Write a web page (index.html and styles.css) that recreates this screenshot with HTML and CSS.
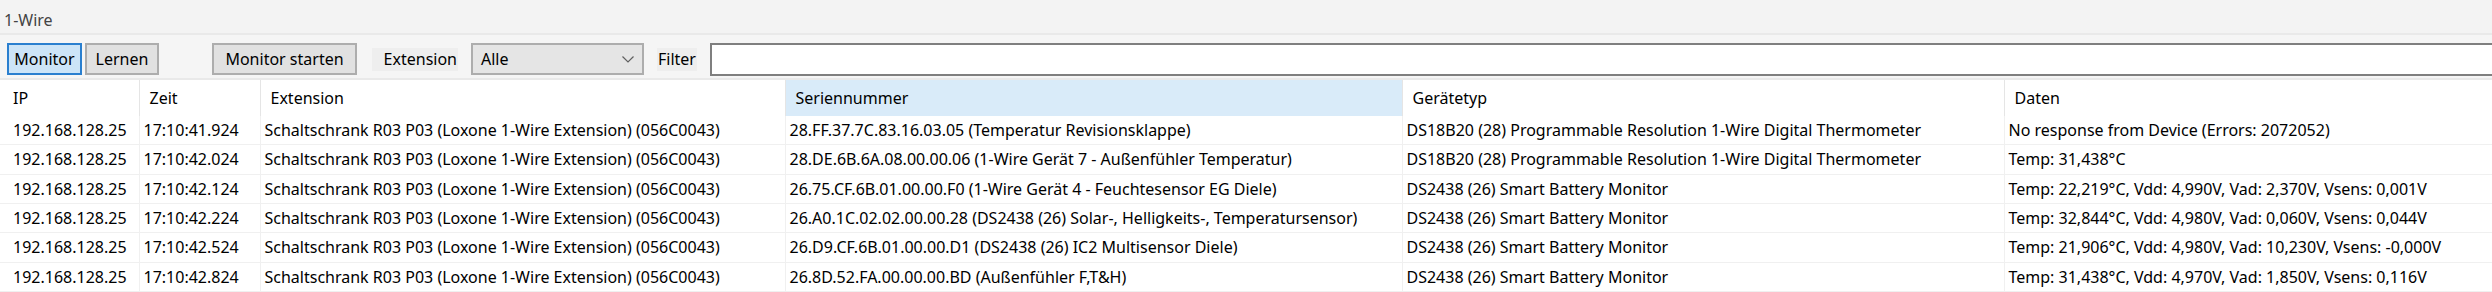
FILE: index.html
```html
<!DOCTYPE html>
<html>

<head>
    <title>1-Wire</title>
    <link rel="stylesheet" href="styles.css">
</head>

<body>
    <div class="title">1-Wire</div>
    <div class="toolbar">
        <button class="btn btn-active btn-monitor">Monitor</button>
        <button class="btn btn-learn">Lernen</button>
        <button class="btn btn-start">Monitor starten</button>
        <span class="label label-ext">Extension</span>
        <div class="combo">
            <span>Alle</span>
            <svg width="12" height="7" viewBox="0 0 12 7">
                <polyline points="0.5,0.5 6,6 11.5,0.5" fill="none" stroke="#606060" stroke-width="1.2" />
            </svg>
        </div>
        <span class="label">Filter</span>
        <input type="text" class="filter">
    </div>
    <table class="grid">
        <colgroup>
            <col class="col-ip">
            <col class="col-time">
            <col class="col-ext">
            <col class="col-serial">
            <col class="col-type">
            <col class="col-data">
        </colgroup>
        <thead>
            <tr>
                <th>IP</th>
                <th>Zeit</th>
                <th>Extension</th>
                <th class="sorted">Seriennummer</th>
                <th>Gerätetyp</th>
                <th>Daten</th>
            </tr>
        </thead>
        <tbody>
            <tr>
                <td>192.168.128.25</td>
                <td>17:10:41.924</td>
                <td>Schaltschrank R03 P03 (Loxone 1-Wire Extension) (056C0043)</td>
                <td>28.FF.37.7C.83.16.03.05 (Temperatur Revisionsklappe)</td>
                <td>DS18B20 (28) Programmable Resolution 1-Wire Digital Thermometer</td>
                <td>No response from Device (Errors: 2072052)</td>
            </tr>
            <tr>
                <td>192.168.128.25</td>
                <td>17:10:42.024</td>
                <td>Schaltschrank R03 P03 (Loxone 1-Wire Extension) (056C0043)</td>
                <td>28.DE.6B.6A.08.00.00.06 (1-Wire Gerät 7 - Außenfühler Temperatur)</td>
                <td>DS18B20 (28) Programmable Resolution 1-Wire Digital Thermometer</td>
                <td>Temp: 31,438°C</td>
            </tr>
            <tr>
                <td>192.168.128.25</td>
                <td>17:10:42.124</td>
                <td>Schaltschrank R03 P03 (Loxone 1-Wire Extension) (056C0043)</td>
                <td>26.75.CF.6B.01.00.00.F0 (1-Wire Gerät 4 - Feuchtesensor EG Diele)</td>
                <td>DS2438 (26) Smart Battery Monitor</td>
                <td>Temp: 22,219°C, Vdd: 4,990V, Vad: 2,370V, Vsens: 0,001V</td>
            </tr>
            <tr>
                <td>192.168.128.25</td>
                <td>17:10:42.224</td>
                <td>Schaltschrank R03 P03 (Loxone 1-Wire Extension) (056C0043)</td>
                <td>26.A0.1C.02.02.00.00.28 (DS2438 (26) Solar-, Helligkeits-, Temperatursensor)</td>
                <td>DS2438 (26) Smart Battery Monitor</td>
                <td>Temp: 32,844°C, Vdd: 4,980V, Vad: 0,060V, Vsens: 0,044V</td>
            </tr>
            <tr>
                <td>192.168.128.25</td>
                <td>17:10:42.524</td>
                <td>Schaltschrank R03 P03 (Loxone 1-Wire Extension) (056C0043)</td>
                <td>26.D9.CF.6B.01.00.00.D1 (DS2438 (26) IC2 Multisensor Diele)</td>
                <td>DS2438 (26) Smart Battery Monitor</td>
                <td>Temp: 21,906°C, Vdd: 4,980V, Vad: 10,230V, Vsens: -0,000V</td>
            </tr>
            <tr>
                <td>192.168.128.25</td>
                <td>17:10:42.824</td>
                <td>Schaltschrank R03 P03 (Loxone 1-Wire Extension) (056C0043)</td>
                <td>26.8D.52.FA.00.00.00.BD (Außenfühler F,T&amp;H)</td>
                <td>DS2438 (26) Smart Battery Monitor</td>
                <td>Temp: 31,438°C, Vdd: 4,970V, Vad: 1,850V, Vsens: 0,116V</td>
            </tr>
            <tr>
                <td></td>
                <td></td>
                <td></td>
                <td></td>
                <td></td>
                <td></td>
            </tr>
        </tbody>
    </table>
</body>

</html>
```

FILE: styles.css
```css
body {
    margin: 0;
    background-color: #f3f3f3;
    font-family: "Noto Sans", "Liberation Sans", Arial, sans-serif;
    font-size: 16px;
    color: #000;
    overflow: hidden;
}

.title {
    height: 21px;
    padding: 12px 0 0 4px;
    line-height: 16px;
    color: #444;
    border-bottom: 2px solid #e9e9e9;
}

.toolbar {
    display: flex;
    align-items: center;
    height: 43px;
    padding-left: 7px;
    border-bottom: 2px solid #e9e9e9;
    background-color: #f5f5f5;
    white-space: nowrap;
}

.toolbar > * {
    flex: none;
}

.btn {
    box-sizing: border-box;
    height: 32px;
    margin-top: 5px;
    border: 2px solid #adadad;
    background-color: #e1e1e1;
    font-family: inherit;
    font-size: 16px;
    color: #000;
    padding: 0;
}

.btn-active {
    border-color: #2a7fcf;
    background-color: #cce4f7;
}

.btn-monitor {
    width: 75px;
}

.btn-learn {
    width: 74px;
    margin-left: 3px;
}

.btn-start {
    width: 145px;
    margin-left: 53px;
}

.label {
    box-sizing: border-box;
    display: flex;
    align-items: center;
    height: 23px;
    margin-top: 5px;
    margin-left: 13px;
    padding: 0 1px;
    background-color: #eeeeee;
}

.label-ext {
    justify-content: flex-end;
    width: 86px;
    margin-left: 15px;
}

.label + .combo,
.label + .filter {
    margin-left: 13px;
}

.combo {
    box-sizing: border-box;
    display: flex;
    align-items: center;
    justify-content: space-between;
    width: 173px;
    height: 32px;
    margin-top: 5px;
    padding: 0 8px 0 8px;
    border: 2px solid #adadad;
    background-color: #e5e5e5;
}

.filter {
    box-sizing: border-box;
    width: 1820px;
    height: 33px;
    margin-top: 5px;
    border: 2px solid #7f7f7f;
    background-color: #fff;
    padding: 0;
}

.grid {
    border-collapse: collapse;
    table-layout: fixed;
    width: 2604px;
    background-color: #fff;
}

.col-ip { width: 139px; }
.col-time { width: 121px; }
.col-ext { width: 525px; }
.col-serial { width: 617px; }
.col-type { width: 602px; }
.col-data { width: 600px; }

.grid th {
    height: 36px;
    padding: 0 0 0 10px;
    font-weight: normal;
    text-align: left;
    border-right: 1px solid #e5e5e5;
    white-space: nowrap;
    overflow: hidden;
}

.grid th.sorted {
    background-color: #d9ebf9;
}

.grid td {
    height: 28.33px;
    padding: 0 0 0 4px;
    border-top: 1px solid #f0f0f0;
    border-right: 1px solid #f0f0f0;
    white-space: nowrap;
    overflow: hidden;
}

.grid th:first-child,
.grid td:first-child {
    padding-left: 13px;
}

.grid tbody tr:first-child td {
    border-top: none;
}
```
